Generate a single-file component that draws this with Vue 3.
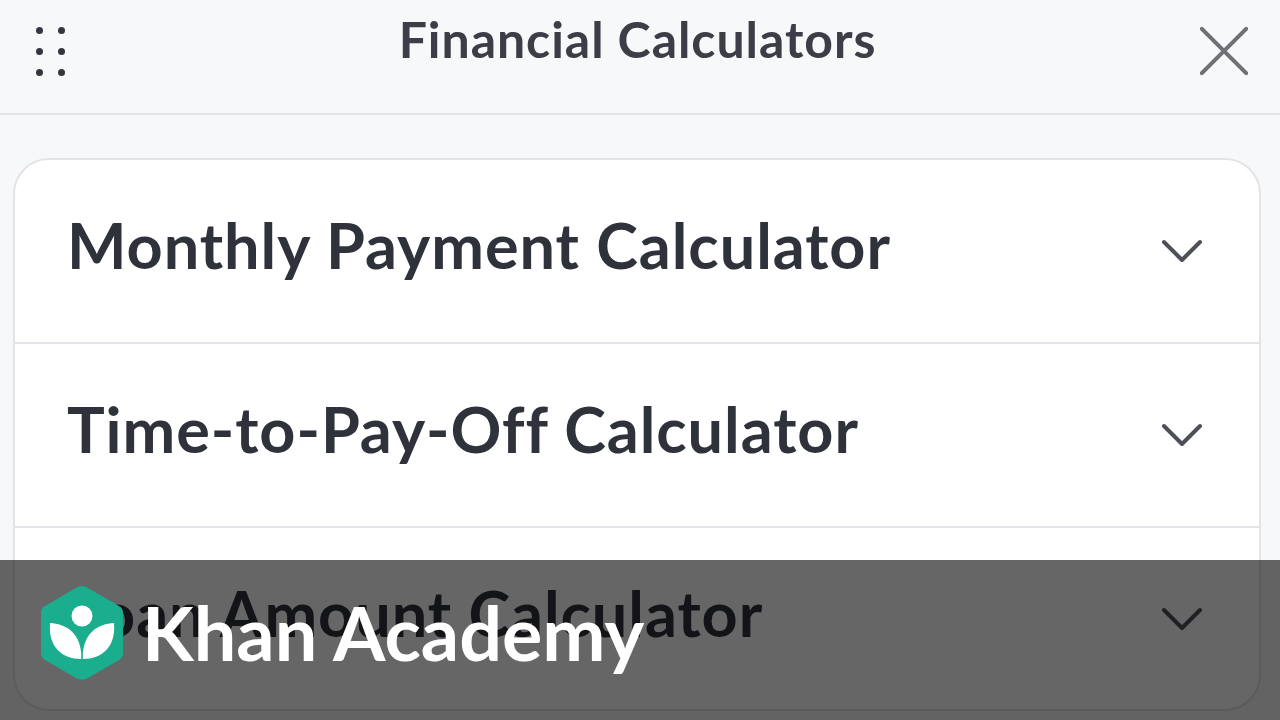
<script setup>
const rows = ['Monthly Payment Calculator', 'Time-to-Pay-Off Calculator', 'Loan Amount Calculator']
const dots = [0, 1, 2, 3, 4, 5]
</script>

<template>
  <div class="page">
    <header class="bar">
      <div class="grip"><i v-for="d in dots" :key="d" class="dot"></i></div>
      <h1 class="title">Financial Calculators</h1>
      <svg class="close" viewBox="0 0 52 52" aria-label="Close">
        <path d="M2 2 L50 50 M50 2 L2 50" />
      </svg>
    </header>
    <main class="body">
      <section class="card">
        <div v-for="r in rows" :key="r" class="row">
          <span class="label">{{ r }}</span>
          <svg class="chev" viewBox="0 0 40 24"><path d="M2 3 L20 21 L38 3" /></svg>
        </div>
      </section>
    </main>
    <div class="overlay">
      <svg class="logo" viewBox="0 0 84 96">
        <path class="hex" d="M42 1 Q45 1 48 3 L79 21 Q83 23 83 28 L83 68 Q83 73 79 75 L48 93 Q42 96 36 93 L5 75 Q1 73 1 68 L1 28 Q1 23 5 21 L36 3 Q39 1 42 1 Z" />
        <circle class="leaf" cx="42" cy="31" r="10.5" />
        <path class="leaf" d="M10 38 C26 39 39 47 41.2 68 L41.2 74 C22 74 8 62 10 38 Z" />
        <path class="leaf" d="M74 38 C58 39 45 47 42.8 68 L42.8 74 C62 74 76 62 74 38 Z" />
      </svg>
      <span class="brand">Khan Academy</span>
    </div>
  </div>
</template>

<style>
html, body { margin: 0; padding: 0; }
</style>

<style scoped>
.page {
  position: relative;
  width: 1280px;
  height: 720px;
  overflow: hidden;
  background: #f7f8fa;
  font-family: Lato, "Liberation Sans", sans-serif;
  color: #21242c;
}
.bar {
  box-sizing: border-box;
  height: 115px;
  padding: 0 32px 0 36px;
  display: flex;
  align-items: center;
  justify-content: space-between;
  border-bottom: 2px solid #e3e4e7;
  filter: blur(0.7px);
}
.grip {
  display: grid;
  grid-template-columns: repeat(2, 7px);
  grid-auto-rows: 7px;
  column-gap: 15px;
  row-gap: 14px;
  margin-bottom: 10px;
}
.dot {
  width: 7px;
  height: 7px;
  border-radius: 50%;
  background: #33363e;
}
.title {
  margin: 0 0 36px 10px;
  font-size: 50px;
  line-height: 60px;
  font-weight: 700;
  letter-spacing: 0.95px;
  color: #3b3e46;
}
.close {
  width: 48px;
  height: 50px;
  margin-bottom: 12px;
}
.close path {
  fill: none;
  stroke: #6f7177;
  stroke-width: 4.5;
  stroke-linecap: round;
}
.body {
  padding: 43px 19px 0 13px;
  filter: blur(0.7px);
}
.card {
  box-sizing: border-box;
  height: 553px;
  background: #fff;
  border: 2px solid #e3e4e7;
  border-radius: 36px;
  overflow: hidden;
}
.row {
  box-sizing: border-box;
  height: 184px;
  padding: 0 57px 0 52px;
  display: flex;
  align-items: center;
  justify-content: space-between;
  border-bottom: 2px solid #e3e4e7;
}
.row:last-child { border-bottom-color: transparent; }
.label {
  font-size: 63px;
  font-weight: 700;
  line-height: 76px;
  letter-spacing: 0.95px;
  margin-bottom: 12px;
  color: #2f323a;
}
.chev {
  width: 40px;
  height: 24px;
}
.chev path {
  fill: none;
  stroke: #4d5057;
  stroke-width: 4;
  stroke-linecap: round;
  stroke-linejoin: round;
}
.overlay {
  position: absolute;
  left: 0;
  right: 0;
  bottom: 0;
  height: 160px;
  padding: 0 0 14px 40px;
  box-sizing: border-box;
  display: flex;
  align-items: center;
  gap: 18px;
  background: rgba(0, 0, 0, 0.6);
}
.logo {
  width: 84px;
  height: 96px;
  flex: none;
  margin-top: -1px;
}
.hex { fill: #1aad8e; }
.leaf { fill: #fff; }
.brand {
  font-size: 75.5px;
  line-height: 90px;
  margin-bottom: 3px;
  font-weight: 700;
  color: #fff;
  white-space: nowrap;
}
</style>
